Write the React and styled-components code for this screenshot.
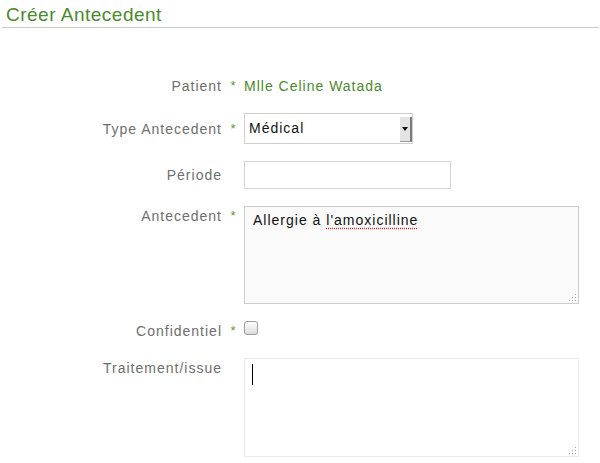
import React from 'react';
import styled, { createGlobalStyle } from 'styled-components';

const GlobalStyle = createGlobalStyle`
  body {
    margin: 0;
    background: #fff;
    font-family: 'Liberation Sans', Arial, sans-serif;
  }
`;

const Page = styled.div`
  padding: 0 1px 0 2px;
  width: 597px;
`;

const Title = styled.h1`
  margin: 0;
  padding: 3px 0 0 4px;
  line-height: 24px;
  font-size: 19px;
  font-weight: normal;
  letter-spacing: 0.5px;
  color: #4a8a2c;
  border-bottom: 1px solid #cccccc;
`;

const Form = styled.div`
  display: flex;
  flex-direction: column;
  gap: 17px;
  padding-top: 48px;
`;

const Row = styled.div`
  display: flex;
  align-items: ${p => (p.$top ? 'flex-start' : 'center')};
  min-height: 20px;
  font-size: 14px;
  letter-spacing: 1px;
  line-height: 20px;
`;

const Label = styled.div`
  width: 220px;
  flex: none;
  text-align: right;
  color: #6e6e6e;
`;

const Star = styled.span`
  width: 22px;
  flex: none;
  text-align: center;
  color: #5c9a3a;
  font-size: 13px;
  letter-spacing: 0;
`;

const Value = styled.div`
  color: #4a8a2c;
`;

const Select = styled.div`
  width: 167px;
  height: 29px;
  display: flex;
  border: 1px solid #cfcfcf;
  background: #fff;
  color: #111;
`;

const SelectText = styled.div`
  flex: 1;
  padding-left: 4px;
  line-height: 29px;
`;

const SelectButton = styled.div`
  width: 10px;
  margin: 3px 0 1px;
  display: flex;
  align-items: center;
  justify-content: center;
  background: #e4e4e4;
  border-right: 2px solid #7a7a7a;
  border-bottom: 1px solid #9a9a9a;
`;

const Input = styled.input`
  width: 207px;
  height: 28px;
  box-sizing: border-box;
  border: 1px solid #d4d4d4;
  background: #fff;
  margin: 0;
  outline: none;
`;

const Area = styled.div`
  position: relative;
  box-sizing: border-box;
  width: 335px;
  height: ${p => p.$h}px;
  padding: 3px 8px;
  border: 1px solid ${p => (p.$light ? '#ebebeb' : '#cccccc')};
  background: ${p => (p.$light ? '#ffffff' : '#fafafa')};
  color: #111;
`;

const Misspelled = styled.span`
  text-decoration: underline dotted #e02020;
  text-underline-offset: 3px;
`;

const Grip = styled.svg`
  position: absolute;
  right: 1px;
  bottom: 1px;
`;

const Caret = styled.span`
  position: absolute;
  left: 7px;
  top: 5px;
  width: 1px;
  height: 21px;
  background: #000;
`;

const Check = styled.input`
  appearance: none;
  margin: 0;
  width: 14px;
  height: 14px;
  border: 1px solid #9c9c9c;
  border-radius: 3px;
  background: linear-gradient(#ffffff, #dcdcdc);
  box-sizing: border-box;
`;

const ResizeGrip = () => (
  <Grip width="9" height="9" viewBox="0 0 9 9">
    <g fill="#a8a8a8">
      <rect x="7" y="1" width="1" height="1" />
      <rect x="7" y="4" width="1" height="1" />
      <rect x="4" y="4" width="1" height="1" />
      <rect x="7" y="7" width="1" height="1" />
      <rect x="4" y="7" width="1" height="1" />
      <rect x="1" y="7" width="1" height="1" />
    </g>
  </Grip>
);

const App = () => (
  <Page>
    <GlobalStyle />
    <Title>Créer Antecedent</Title>
    <Form>
      <Row>
        <Label>Patient</Label>
        <Star>*</Star>
        <Value>Mlle Celine Watada</Value>
      </Row>
      <Row>
        <Label>Type Antecedent</Label>
        <Star>*</Star>
        <Select>
          <SelectText>Médical</SelectText>
          <SelectButton>
            <svg width="6" height="4" viewBox="0 0 6 4">
              <path d="M0 0h6L3 4z" fill="#111" />
            </svg>
          </SelectButton>
        </Select>
      </Row>
      <Row>
        <Label>Période</Label>
        <Star />
        <Input type="text" />
      </Row>
      <Row $top>
        <Label>Antecedent</Label>
        <Star>*</Star>
        <Area $h={98}>
          Allergie à <Misspelled>l'amoxicilline</Misspelled>
          <ResizeGrip />
        </Area>
      </Row>
      <Row $top>
        <Label>Confidentiel</Label>
        <Star>*</Star>
        <Check type="checkbox" />
      </Row>
      <Row $top>
        <Label>Traitement/issue</Label>
        <Star />
        <Area $h={99} $light>
          <Caret />
          <ResizeGrip />
        </Area>
      </Row>
    </Form>
  </Page>
);

export default App;
